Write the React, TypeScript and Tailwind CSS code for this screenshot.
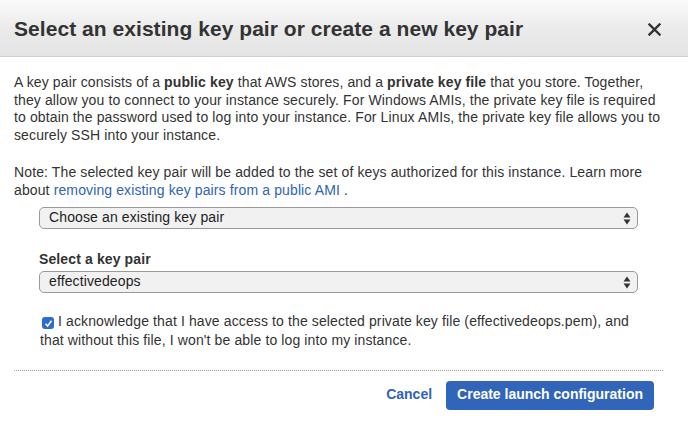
import React from 'react';

function SelectBox({ value }: { value: string }) {
  return (
    <div className="relative h-[22px] rounded-[5px] border border-[#9a9a9a] bg-[#f1f1f1] flex items-center pl-[9px] text-[14px] text-[#222]">
      <span>{value}</span>
      <svg className="absolute right-[6px] top-[4px]" width="8" height="13" viewBox="0 0 8 13">
        <path d="M4 0.5 L7.5 5.5 L0.5 5.5 Z" fill="#333" />
        <path d="M4 12.5 L7.5 7.5 L0.5 7.5 Z" fill="#333" />
      </svg>
    </div>
  );
}

export default function App() {
  return (
    <div
      className="w-[688px] h-[426px] bg-white text-[#333] overflow-hidden"
      style={{ fontFamily: '"Liberation Sans", Arial, sans-serif' }}
    >
      {/* Header */}
      <div className="h-[57px] flex items-center justify-between pl-[14px] pr-[27px] border-b border-[#cfcfcf] bg-gradient-to-b from-[#fafafa] via-[#ebebeb] to-[#e3e4e3]">
        <h2 className="text-[21px] font-bold text-[#333] tracking-[0.05px] mt-[2px]">
          Select an existing key pair or create a new key pair
        </h2>
        <svg width="13" height="13" viewBox="0 0 13 13" className="mt-[2px]">
          <path d="M1.5 1.5 L11.5 11.5 M11.5 1.5 L1.5 11.5" stroke="#333" strokeWidth="2.4" strokeLinecap="square" />
        </svg>
      </div>

      {/* Body */}
      <div className="pl-[14px] pt-[17px] text-[14px] leading-[17.5px] tracking-[0.12px]">
        <div className="pr-[24px]">
          <p>
            A key pair consists of a <b>public key</b> that AWS stores, and a <b>private key file</b> that you store. Together,
            they allow you to connect to your instance securely. For Windows AMIs, the private key file is required to obtain
            the password used to log into your instance. For Linux AMIs, the private key file allows you to securely SSH into
            your instance.
          </p>
          <p className="mt-[20px]">
            Note: The selected key pair will be added to the set of keys authorized for this instance. Learn more about{' '}
            <span className="text-[#2f64b5]">removing existing key pairs from a public AMI</span> .
          </p>
        </div>

        <div className="pl-[25px] pr-[50px] mt-[8px]">
          <SelectBox value="Choose an existing key pair" />
          <div className="mt-[22px] font-bold">Select a key pair</div>
          <div className="mt-[2px]">
            <SelectBox value="effectivedeops" />
          </div>

          <div className="mt-[19px] pl-[1px] leading-[19px]">
            <span className="inline-flex align-[-2px] items-center justify-center w-[12px] h-[12px] rounded-[3px] bg-[#2d6bd0] mr-[4px] ml-[2px]">
              <svg width="9" height="9" viewBox="0 0 9 9">
                <path d="M1.5 4.8 L3.6 7 L7.5 1.8" stroke="white" strokeWidth="1.6" fill="none" />
              </svg>
            </span>
            I acknowledge that I have access to the selected private key file (effectivedeops.pem), and that without this
            file, I won't be able to log into my instance.
          </div>
        </div>

        <div className="mr-[25px] mt-[20px] border-t border-dotted border-[#a89f94]" />

        <div className="flex justify-end items-center mt-[10px] mr-[34px] gap-[14px] tracking-normal">
          <span className="font-bold text-[#2f64b5] text-[14px]">Cancel</span>
          <button className="h-[29px] px-[11px] rounded-[4px] bg-[#3165b9] text-white font-bold text-[14px]">
            Create launch configuration
          </button>
        </div>
      </div>
    </div>
  );
}
